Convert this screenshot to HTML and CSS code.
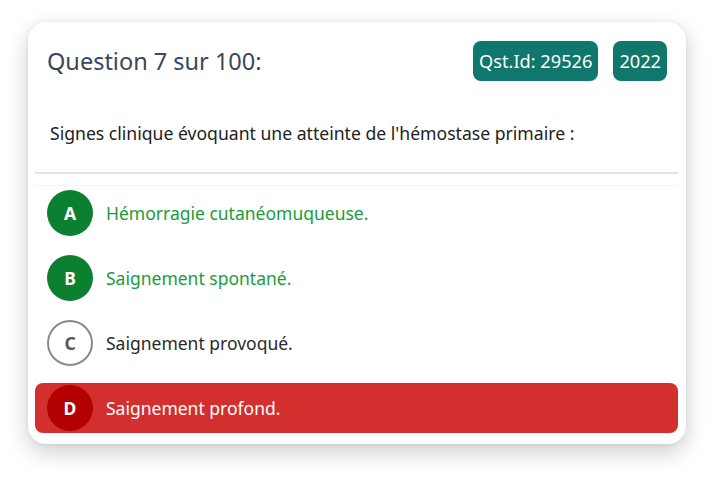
FILE: index.html
```html
<!DOCTYPE html>
<html lang="fr">
<head>
<meta charset="utf-8">
<title>Question 7</title>
<link rel="stylesheet" href="styles.css">
</head>
<body>
<div class="card">
  <div class="header">
    <h2 class="title">Question 7 sur 100:</h2>
    <div class="badges">
      <span class="badge">Qst.Id: 29526</span>
      <span class="badge">2022</span>
    </div>
  </div>
  <p class="question">Signes clinique évoquant une atteinte de l'hémostase primaire :</p>
  <div class="body">
    <hr class="divider">
    <ul class="options">
      <li class="option correct"><span class="letter">A</span><span class="label">Hémorragie cutanéomuqueuse.</span></li>
      <li class="option correct"><span class="letter">B</span><span class="label">Saignement spontané.</span></li>
      <li class="option neutral"><span class="letter">C</span><span class="label">Saignement provoqué.</span></li>
      <li class="option wrong"><span class="letter">D</span><span class="label">Saignement profond.</span></li>
    </ul>
  </div>
</div>
</body>
</html>
```

FILE: styles.css
```css
* { box-sizing: border-box; }
html, body { margin: 0; padding: 0; background: #ffffff; }
body {
  font-family: "Noto Sans", "Open Sans", sans-serif;
  color: #222;
  padding: 22px 0 37px 28px;
  min-height: 481px;
}
.card {
  width: 658px;
  height: 422px;
  background: #fff;
  border-radius: 18px;
  box-shadow: 0 8px 22px rgba(0,0,0,0.2), 0 0 4px rgba(0,0,0,0.07);
  padding: 19px 0 11px 0;
}
.header {
  display: flex;
  justify-content: space-between;
  align-items: center;
  padding: 0 19px;
  height: 40px;
}
.title {
  margin: 0;
  font-weight: 400;
  font-size: 23.5px;
  color: #3d4656;
}
.badges { display: flex; gap: 15px; }
.badge {
  background: #10776c;
  color: #fff;
  font-size: 18.2px;
  height: 40px;
  line-height: 40px;
  padding: 0 6px;
  border-radius: 8px;
}
.question {
  margin: 40px 0 0 22px;
  font-size: 17.6px;
  line-height: 24px;
}
.body { padding: 0 8px 0 7px; margin-top: 27px; }
.divider {
  margin: 0;
  border: 0;
  height: 2px;
  background: #e2e2e8;
}
.options {
  list-style: none;
  margin: 11px 0 0 0;
  padding: 2px 0 0 0;
  border-top: 1px solid #f4f4f6;
  display: flex;
  flex-direction: column;
  gap: 15px;
}
.option {
  height: 50px;
  display: flex;
  align-items: center;
  gap: 13px;
  padding-left: 12px;
  border-radius: 8px;
  font-size: 17.5px;
}
.letter {
  width: 46px;
  height: 46px;
  border-radius: 50%;
  display: flex;
  align-items: center;
  justify-content: center;
  font-weight: 700;
  font-size: 17.5px;
  color: #fff;
  flex: none;
}
.correct .letter { background: #0a8030; }
.correct .label { color: #1a9c3c; }
.neutral .letter {
  border: 2px solid #8a8a8a;
  color: #555;
  background: #fff;
}
.neutral .label { color: #2a2a2a; }
.wrong { background: #d32f2f; }
.wrong .letter { background: #b30000; }
.wrong .label { color: #fff; }
```
